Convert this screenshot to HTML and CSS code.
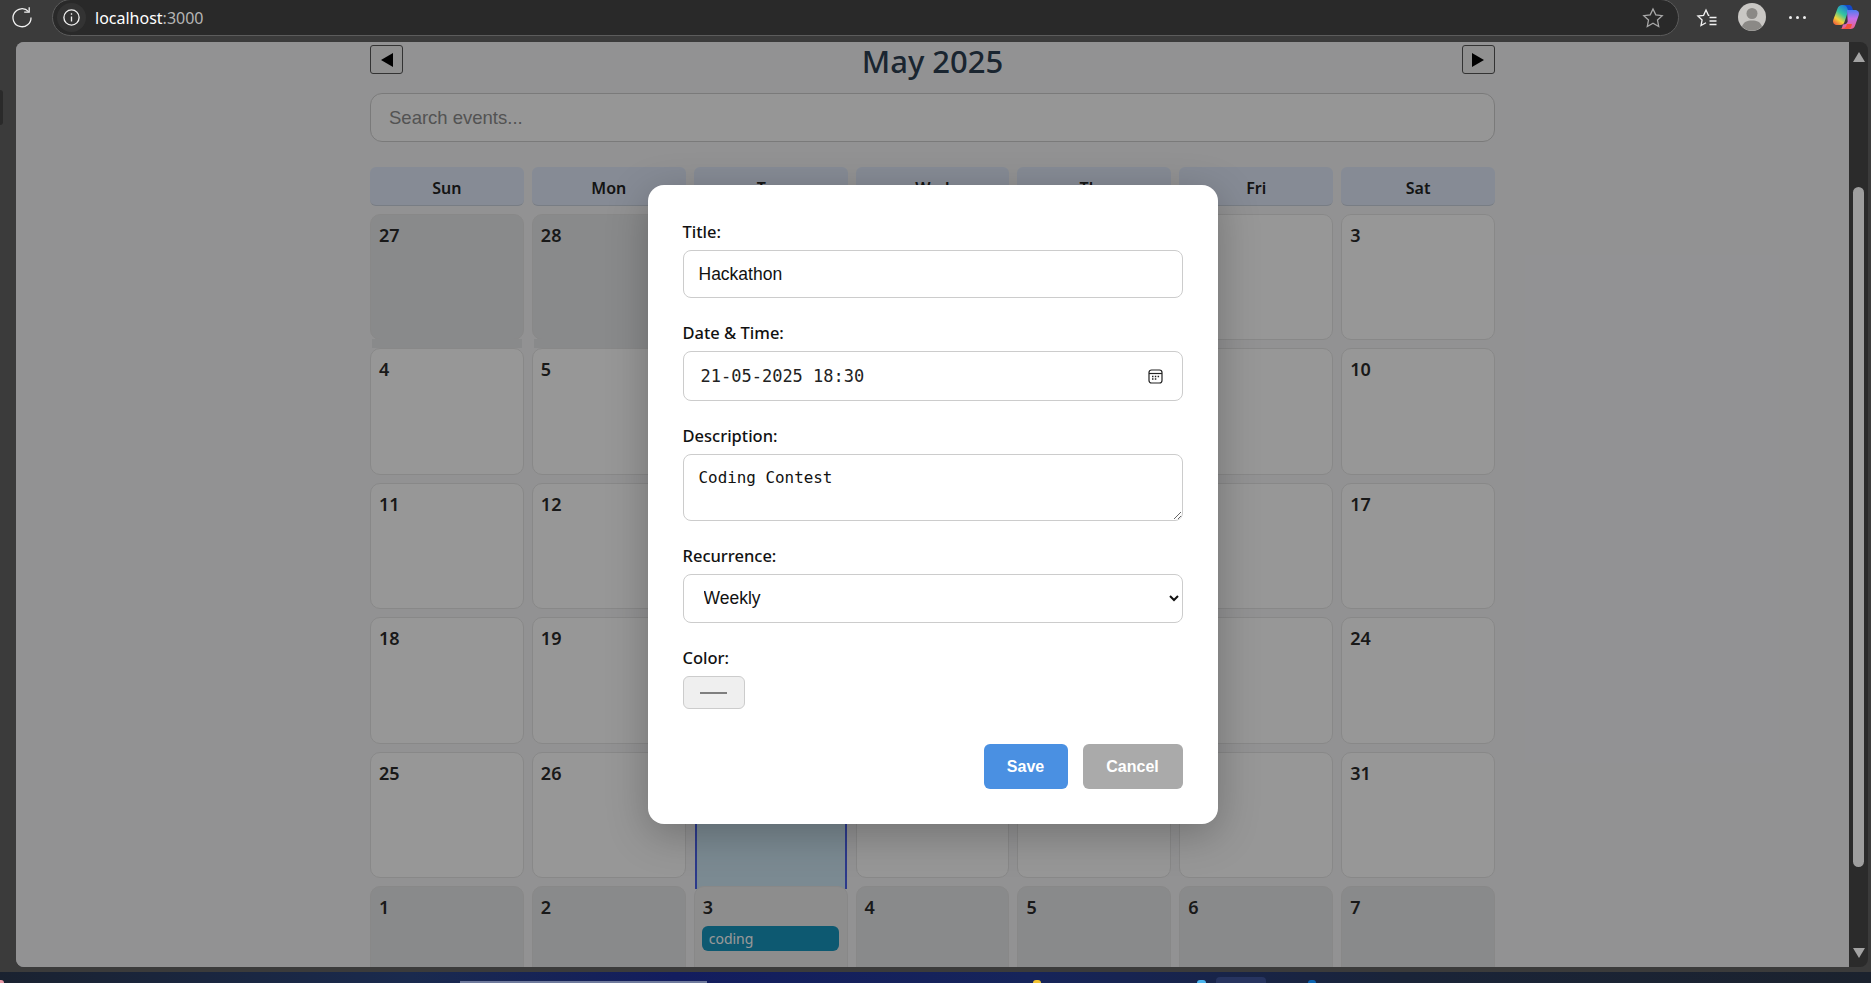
FILE: index.html
```html
<!DOCTYPE html>
<html lang="en">
<head>
  <meta charset="UTF-8">
  <title>Calendar</title>
  <link rel="stylesheet" href="styles.css">
</head>
<body>
  <header class="toolbar">
    <svg class="reload" viewBox="0 0 24 24" width="24" height="24">
      <path d="M18.6 6.6A9 9 0 1 0 21 12.4" />
      <path d="M19.2 2.2v5h-5" />
    </svg>
    <div class="address">
      <span class="site-info">
        <svg viewBox="0 0 20 20" width="19" height="19">
          <circle cx="10" cy="10" r="8" />
          <path d="M10 9v5.2M10 5.6v1.4" />
        </svg>
      </span>
      <span class="url">localhost<span class="url-port">:3000</span></span>
      <svg class="star" viewBox="0 0 24 24" width="24" height="24">
        <path d="M12 3l2.8 5.9 6.4.8-4.7 4.4 1.2 6.4-5.7-3.2-5.7 3.2 1.2-6.4-4.7-4.4 6.4-.8z" />
      </svg>
    </div>
    <svg class="favorites" viewBox="0 0 24 24" width="24" height="24">
      <path d="M11 17.8l-5 2.8 1.1-5.7-4.2-3.9 5.7-.7L11 5l2.4 5.3h1" />
      <path d="M14.5 12.5h7M14.5 16h7M14.5 19.500h7" />
    </svg>
    <svg class="avatar" viewBox="0 0 28 28" width="28" height="28">
      <circle cx="14" cy="14" r="14" fill="#c9c7c4" />
      <circle cx="14" cy="10.500" r="5.500" fill="#8b8986" />
      <path d="M4 23.500c1.500-4.500 5-6 10-6s8.500 1.500 10 6a14 14 0 0 1-20 0z" fill="#8b8986" />
    </svg>
    <div class="dots"><i></i><i></i><i></i></div>
    <svg class="copilot" viewBox="0 0 28 28" width="28" height="28">
      <defs>
        <linearGradient id="copLeft" x1="0.8" y1="0" x2="0.2" y2="1">
          <stop offset="0" stop-color="#1c6fe0" />
          <stop offset="0.45" stop-color="#35c6a0" />
          <stop offset="0.75" stop-color="#f3d43a" />
          <stop offset="1" stop-color="#f0663a" />
        </linearGradient>
        <linearGradient id="copRight" x1="0.5" y1="0" x2="0.5" y2="1">
          <stop offset="0" stop-color="#4d7df0" />
          <stop offset="0.45" stop-color="#c56ee8" />
          <stop offset="1" stop-color="#ee5f86" />
        </linearGradient>
      </defs>
      <path d="M10 2h8l-5.500 17c-.6 1.800-2 3-4 3H5c-3 0-4.600-2.600-3.700-5.300L5.500 5.500C6.200 3.400 8 2 10 2z" fill="url(#copLeft)" />
      <path d="M15 7h8c3 0 4.700 2.400 3.700 5.300l-3.700 10.500c-.8 2.100-2.500 3.200-4.500 3.200h-9l1.500-4.500c3 0 4-1 4.700-3z" fill="url(#copRight)" />
      <path d="M11 2h6c1.700 0 2.800 1.300 3.300 3l.7 2h-5l-1-2.500C14.500 3 13 2.200 11 2z" fill="#1448c8" />
      <path d="M7 26h9c1.600 0 2.800-1 3.300-2.500l.7-2.500h-5l-1 2.500C13.400 25 11 26 7 26z" fill="#f2523a" />
    </svg>
  </header>

  <div class="middle">
    <div class="gutter"><div class="side-tab"></div></div>

    <main class="viewport">
      <div class="calendar">
        <div class="month-row">
          <button class="nav-btn" type="button">
            <svg viewBox="0 0 12 14" width="12" height="14"><path d="M12 0v14L0 7z" /></svg>
          </button>
          <h1 class="month-title">May 2025</h1>
          <button class="nav-btn" type="button">
            <svg viewBox="0 0 12 14" width="12" height="14"><path d="M0 0v14l12-7z" /></svg>
          </button>
        </div>

        <input class="search" type="text" placeholder="Search events...">

        <div class="grid">
          <div class="weekday">Sun</div>
          <div class="weekday">Mon</div>
          <div class="weekday">Tue</div>
          <div class="weekday">Wed</div>
          <div class="weekday">Thu</div>
          <div class="weekday">Fri</div>
          <div class="weekday">Sat</div>

          <div class="cell other spill">27</div>
          <div class="cell other spill">28</div>
          <div class="cell other spill">29</div>
          <div class="cell other spill">30</div>
          <div class="cell">1</div>
          <div class="cell">2</div>
          <div class="cell">3</div>

          <div class="cell">4</div>
          <div class="cell">5</div>
          <div class="cell">6</div>
          <div class="cell">7</div>
          <div class="cell">8</div>
          <div class="cell">9</div>
          <div class="cell">10</div>

          <div class="cell">11</div>
          <div class="cell">12</div>
          <div class="cell">13</div>
          <div class="cell">14</div>
          <div class="cell">15</div>
          <div class="cell">16</div>
          <div class="cell">17</div>

          <div class="cell">18</div>
          <div class="cell">19</div>
          <div class="cell">20</div>
          <div class="cell">21</div>
          <div class="cell">22</div>
          <div class="cell">23</div>
          <div class="cell">24</div>

          <div class="cell">25</div>
          <div class="cell">26</div>
          <div class="cell today">27</div>
          <div class="cell">28</div>
          <div class="cell">29</div>
          <div class="cell">30</div>
          <div class="cell">31</div>

          <div class="cell other">1</div>
          <div class="cell other">2</div>
          <div class="cell other hovered">3<div class="event">coding</div></div>
          <div class="cell other">4</div>
          <div class="cell other">5</div>
          <div class="cell other">6</div>
          <div class="cell other">7</div>
        </div>
      </div>

      <div class="overlay">
        <form class="dialog">
          <label class="field-label" for="title">Title:</label>
          <input class="field title-input" id="title" type="text" value="Hackathon">

          <label class="field-label" for="when">Date &amp; Time:</label>
          <div class="field date-box">
            <input class="date-input" id="when" type="text" value="21-05-2025 18:30">
            <svg class="date-icon" viewBox="0 0 15 15" width="15" height="15">
              <rect x="1" y="1" width="13" height="13" rx="2.500" />
              <path d="M1 4.500h13" />
              <path class="date-dots" d="M4 7.500h1.500M6.800 7.500h1.500M9.600 7.500h1.500M4 10h1.500M6.800 10h1.500" />
            </svg>
          </div>

          <label class="field-label" for="desc">Description:</label>
          <textarea class="field desc-input" id="desc">Coding Contest</textarea>

          <label class="field-label" for="recur">Recurrence:</label>
          <select class="field recur-input" id="recur">
            <option>None</option>
            <option>Daily</option>
            <option selected>Weekly</option>
            <option>Monthly</option>
          </select>

          <span class="field-label">Color:</span>
          <button class="color-btn" type="button"><span class="color-dash"></span></button>

          <div class="actions">
            <button class="btn btn-save" type="button">Save</button>
            <button class="btn btn-cancel" type="button">Cancel</button>
          </div>
        </form>
      </div>
    </main>

    <div class="scroll-col">
      <div class="scroll-panel">
        <span class="arrow-up"></span>
        <span class="thumb"></span>
        <span class="arrow-down"></span>
      </div>
    </div>
  </div>

  <div class="strip"></div>
  <footer class="taskbar">
    <i class="peek peek-pink"></i>
    <i class="peek peek-window"></i>
    <i class="peek peek-yellow"></i>
    <i class="peek peek-blue"></i>
    <i class="peek peek-active"></i>
    <i class="peek peek-edge"></i>
  </footer>
</body>
</html>
```

FILE: styles.css
```css
* {
  box-sizing: border-box;
}
html, body {
  margin: 0;
  height: 100%;
}
body {
  display: flex;
  flex-direction: column;
  height: 100vh;
  overflow: hidden;
  background: #3b3b3b;
  font-family: "Noto Sans", "Open Sans", sans-serif;
}

/* browser toolbar */
.toolbar {
  display: flex;
  align-items: center;
  flex: 0 0 42px;
  height: 42px;
  padding: 0 0 8px 10px;
  background: #3b3b3b;
}
.reload {
  fill: none;
  stroke: #f2f2f2;
  stroke-width: 1.300;
  margin-right: 18px;
}
.address {
  display: flex;
  align-items: center;
  width: 1627px;
  height: 37px;
  margin-top: 1px;
  padding: 0 13px 0 4px;
  background: #292929;
  border: 1px solid #5c5c5c;
  border-radius: 19px;
}
.site-info {
  display: flex;
  align-items: center;
  justify-content: center;
  width: 29px;
  height: 29px;
  margin-right: 9px;
  background: #333;
  border-radius: 50%;
}
.site-info svg {
  fill: none;
  stroke: #f0f0f0;
  stroke-width: 1.400;
}
.url {
  flex: 1;
  font-size: 16px;
  color: #fff;
}
.url-port {
  color: #b5b5b5;
}
.star {
  fill: none;
  stroke: #a8a8a8;
  stroke-width: 1.300;
}
.favorites {
  fill: none;
  stroke: #f2f2f2;
  stroke-width: 1.300;
  margin-left: 16px;
}
.avatar {
  margin-left: 19px;
}
.dots {
  display: flex;
  gap: 4px;
  margin-left: 23px;
}
.dots i {
  width: 3px;
  height: 3px;
  background: #eee;
  border-radius: 50%;
}
.copilot {
  margin-left: 26px;
}

/* window content */
.middle {
  display: flex;
  flex: 1;
  min-height: 0;
}
.gutter {
  flex: 0 0 16px;
  padding-top: 48px;
}
.side-tab {
  width: 3px;
  height: 35px;
  background: #2a2a2a;
  border-radius: 0 4px 4px 0;
}
.viewport {
  position: relative;
  flex: 1;
  overflow: hidden;
  background: #f4f4f6;
  border-radius: 8px 0 0 8px;
}
.scroll-col {
  flex: 0 0 22px;
  padding-right: 3px;
}
.scroll-panel {
  display: flex;
  flex-direction: column;
  align-items: center;
  height: 100%;
  padding-top: 10px;
  background: #2b2b2b;
  border-radius: 0 8px 8px 0;
}
.arrow-up, .arrow-down {
  width: 0;
  height: 0;
  border-left: 6px solid transparent;
  border-right: 6px solid transparent;
}
.arrow-up {
  border-bottom: 10px solid #a3a3a3;
}
.arrow-down {
  margin-top: 81px;
  border-top: 10px solid #a3a3a3;
}
.thumb {
  width: 11px;
  height: 680px;
  margin-top: 125px;
  background: #9e9e9e;
  border-radius: 6px;
}

/* calendar page */
.calendar {
  width: 1125px;
  margin: 0 auto;
  padding-top: 3px;
}
.month-row {
  display: flex;
  justify-content: space-between;
  align-items: flex-start;
  height: 31px;
  margin-bottom: 17px;
}
.month-title {
  margin: 1px 0 0;
  font-size: 31px;
  line-height: 31px;
  font-weight: 500;
  color: #2c3e50;
}
.nav-btn {
  display: flex;
  align-items: center;
  justify-content: center;
  width: 33px;
  height: 29px;
  padding: 0;
  background: #f0f0f0;
  border: 1px solid #555;
  border-radius: 3px;
}
.nav-btn svg {
  fill: #000;
}
.search {
  display: block;
  width: 100%;
  height: 49px;
  margin-bottom: 25px;
  padding: 0 18px;
  font-family: "Liberation Sans", Arial, sans-serif;
  font-size: 18.500px;
  background: #fbfbfb;
  border: 1px solid #ccc;
  border-radius: 12px;
}
.search::placeholder {
  color: #8a8a8a;
}
.grid {
  display: grid;
  grid-template-columns: repeat(7, 1fr);
  grid-template-rows: 39px;
  grid-auto-rows: 126.400px;
  gap: 8px;
}
.weekday {
  display: flex;
  align-items: center;
  justify-content: center;
  padding-top: 3px;
  font-size: 16px;
  font-weight: 600;
  color: #222;
  background: #dfe8f8;
  border-bottom: 1px solid #c9d0dc;
  border-radius: 6px;
}
.cell {
  position: relative;
  padding: 8px 8px;
  font-size: 18px;
  font-weight: 600;
  color: #2b2b2b;
  background: #fcfcfc;
  border: 1px solid #e3e3e3;
  border-radius: 10px;
}
.cell.other {
  background: #e5e6e8;
}
.cell.hovered {
  background: #ebebec;
}
.cell.spill::after {
  content: "";
  position: absolute;
  left: 1px;
  right: 1px;
  top: 100%;
  height: 9px;
  background: #e5e6e8;
}
.cell.today {
  margin: 0 1px -11px;
  background: #cde6f3;
  border: 2px solid #4a61e8;
  border-bottom: 0;
  border-radius: 10px 10px 0 0;
}
.event {
  height: 25px;
  margin: 7px 0 0 -1px;
  padding: 0 7px;
  font-size: 14px;
  line-height: 26px;
  font-weight: 400;
  color: #fff;
  background: #1694bc;
  border-radius: 6px;
}

/* dialog */
.overlay {
  position: absolute;
  inset: 0;
  display: flex;
  align-items: center;
  justify-content: center;
  background: rgba(0, 0, 0, 0.4);
}
.dialog {
  display: flex;
  flex-direction: column;
  width: 570px;
  height: 639px;
  padding: 36px 35px 35px;
  background: #fff;
  border-radius: 16px;
  box-shadow: 0 10px 40px rgba(0, 0, 0, 0.25);
}
.field-label {
  display: block;
  margin-bottom: 7px;
  font-size: 16.500px;
  line-height: 22px;
  font-weight: 500;
  color: #111;
}
.field {
  display: block;
  width: 100%;
  margin-bottom: 24px;
  background: #fff;
  border: 1px solid #ccc;
  border-radius: 8px;
  color: #111;
}
.title-input {
  height: 48px;
  padding: 0 15px;
  font-family: "Liberation Sans", Arial, sans-serif;
  font-size: 17.500px;
}
.date-box {
  display: flex;
  align-items: center;
  height: 50px;
  padding: 0 15px 0 17px;
}
.date-input {
  flex: 1;
  min-width: 0;
  padding: 0;
  border: 0;
  outline: 0;
  font-family: "DejaVu Sans Mono", monospace;
  font-size: 17px;
  color: #222;
  background: transparent;
}
.date-icon {
  margin-right: 4px;
  fill: none;
  stroke: #222;
  stroke-width: 1.200;
}
.date-icon .date-dots {
  stroke-width: 1.300;
}
.desc-input {
  height: 67px;
  padding: 13px 15px;
  font-family: "DejaVu Sans Mono", monospace;
  font-size: 15.900px;
  line-height: 20px;
}
.recur-input {
  height: 49px;
  padding: 0 16px 2px;
  margin-bottom: 24px;
  font-family: "Liberation Sans", Arial, sans-serif;
  font-size: 17.500px;
}
.color-btn {
  display: flex;
  align-items: center;
  justify-content: center;
  width: 62px;
  height: 33px;
  padding: 0;
  background: #efefef;
  border: 1px solid #ccc;
  border-radius: 6px;
}
.color-dash {
  width: 27px;
  height: 2px;
  background: #7f7f7f;
}
.actions {
  display: flex;
  justify-content: flex-end;
  gap: 15px;
  margin-top: 35px;
}
.btn {
  height: 45px;
  padding: 0;
  border: 0;
  border-radius: 6px;
  font-family: "Liberation Sans", Arial, sans-serif;
  font-size: 16px;
  font-weight: 700;
  color: #fff;
}
.btn-save {
  width: 84px;
  background: #4a90e2;
}
.btn-cancel {
  width: 100px;
  background: #aaa;
}

/* bottom of the desktop */
.strip {
  flex: 0 0 5px;
  background: #3b3b3b;
}
.taskbar {
  display: flex;
  align-items: flex-end;
  flex: 0 0 11px;
  overflow: hidden;
  background: linear-gradient(90deg, #1a2230 0%, #1a2a4e 22%, #131d5e 36%, #16245a 55%, #1a2438 75%, #1b222e 100%);
}
.peek {
  display: block;
}
.peek-pink {
  width: 4px;
  height: 3px;
  background: #e79aa8;
  border-radius: 0 3px 0 0;
}
.peek-window {
  width: 247px;
  height: 2px;
  margin-left: 456px;
  background: #6f7a9c;
}
.peek-yellow {
  width: 8px;
  height: 3px;
  margin-left: 326px;
  background: #f2c230;
  border-radius: 4px 4px 0 0;
}
.peek-blue {
  width: 9px;
  height: 3px;
  margin-left: 156px;
  background: #4ab4ee;
  border-radius: 4px 4px 0 0;
}
.peek-active {
  width: 50px;
  height: 6px;
  margin-left: 10px;
  background: #27345f;
  border-radius: 4px 4px 0 0;
}
.peek-edge {
  width: 8px;
  height: 3px;
  margin-left: 42px;
  background: #0b63b0;
  border-radius: 4px 4px 0 0;
}
```
